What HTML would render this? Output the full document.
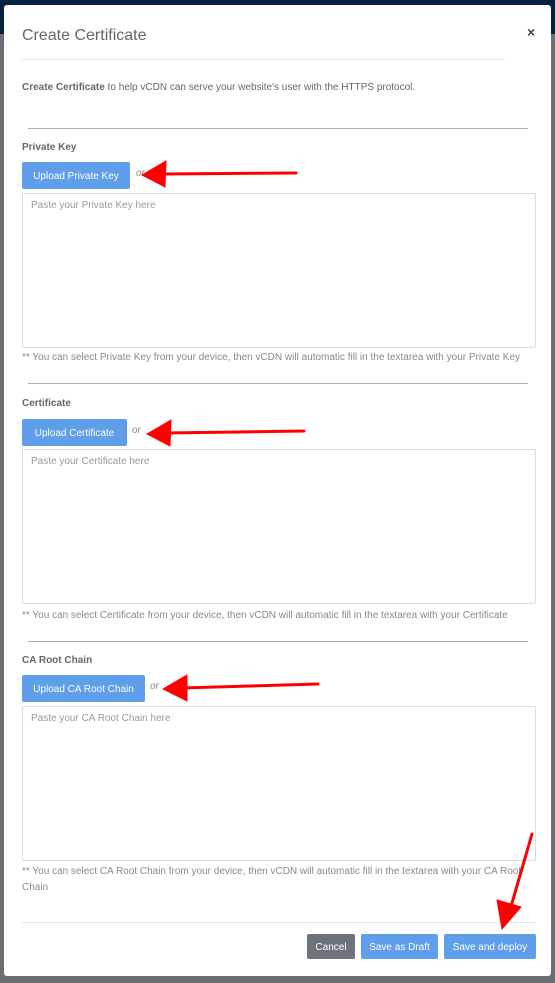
<!DOCTYPE html>
<html><head><style>
*{margin:0;padding:0;box-sizing:border-box}
body{width:555px;height:983px;background:#6b6e72;position:relative;overflow:hidden;font-family:"Liberation Sans",sans-serif;color:#666}
.top{position:absolute;left:0;top:0;width:555px;height:34px;background:#06213f}
.modal{position:absolute;left:4px;top:5px;width:547px;height:971px;background:#fff;border-radius:3px}
.a{position:absolute;white-space:nowrap;line-height:12px}
.t{font-size:10px}
.b{font-weight:bold}
.hr{position:absolute;height:1px;background:#a9b0c2}
.btn{position:absolute;background:#5f9eea;color:#fff;font-size:10px;border-radius:2px;display:flex;align-items:center;justify-content:center;padding-top:2px}
.ta{position:absolute;left:22px;width:514px;height:155px;border:1px solid #dcdcdc;border-radius:2px}
.ta span{position:absolute;left:8px;top:6px;font-size:10px;color:#999}
.or{font-style:italic;font-size:10px;color:#888}
</style></head><body>
<div class="top"></div>
<div class="modal"></div>
<div class="a" style="left:22px;top:27px;font-size:16px;line-height:18px;color:#666">Create Certificate</div>
<div class="a" style="left:527px;top:24px;font-size:14px;line-height:16px;font-weight:bold;color:#444">×</div>
<div class="hr" style="left:21px;top:59px;width:484px;background:#e5e5e5"></div>
<div class="a t" style="left:22px;top:82px"><b>Create Certificate</b> to help vCDN can serve your website's user with the HTTPS protocol.</div>

<div class="hr" style="left:28px;top:128px;width:500px"></div>
<div class="a t b" style="left:22px;top:142px">Private Key</div>
<div class="btn" style="left:22px;top:162px;width:108px;height:27px">Upload Private Key</div>
<div class="a or" style="left:136px;top:168px">or</div>
<div class="ta" style="top:193px"><span>Paste your Private Key here</span></div>
<div class="a t" style="left:22px;top:352px;color:#888">** You can select Private Key from your device, then vCDN will automatic fill in the textarea with your Private Key</div>

<div class="hr" style="left:28px;top:383px;width:500px"></div>
<div class="a t b" style="left:22px;top:398px">Certificate</div>
<div class="btn" style="left:22px;top:419px;width:105px;height:27px">Upload Certificate</div>
<div class="a or" style="left:132px;top:425px">or</div>
<div class="ta" style="top:449px"><span>Paste your Certificate here</span></div>
<div class="a t" style="left:22px;top:610px;color:#888">** You can select Certificate from your device, then vCDN will automatic fill in the textarea with your Certificate</div>

<div class="hr" style="left:28px;top:641px;width:500px"></div>
<div class="a t b" style="left:22px;top:655px">CA Root Chain</div>
<div class="btn" style="left:22px;top:675px;width:123px;height:27px">Upload CA Root Chain</div>
<div class="a or" style="left:150px;top:681px">or</div>
<div class="ta" style="top:706px"><span>Paste your CA Root Chain here</span></div>
<div class="a t" style="left:22px;top:864px;color:#888;white-space:normal;width:512px;line-height:16px">** You can select CA Root Chain from your device, then vCDN will automatic fill in the textarea with your CA Root Chain</div>

<div class="hr" style="left:22px;top:922px;width:514px;background:#e5e5e5"></div>
<div class="btn" style="left:307px;top:934px;width:48px;height:25px;background:#6c737b">Cancel</div>
<div class="btn" style="left:361px;top:934px;width:77px;height:25px">Save as Draft</div>
<div class="btn" style="left:444px;top:934px;width:92px;height:25px">Save and deploy</div>

<svg class="a" style="left:0;top:0" width="555" height="983">
<g stroke="#f00" stroke-width="3" stroke-linecap="round" fill="#f00">
<line x1="296" y1="173" x2="160" y2="174"/><polygon points="142,175 166,161 165,187" stroke-width="1"/>
<line x1="304" y1="431" x2="165" y2="433"/><polygon points="147,434 171,420 170,446" stroke-width="1"/>
<line x1="318" y1="684" x2="181" y2="688"/><polygon points="163,689 187,675 187,701" stroke-width="1"/>
<line x1="532" y1="834" x2="510" y2="910"/><polygon points="502,929 497,900 521,907" stroke-width="1"/>
</g></svg>
</body></html>
